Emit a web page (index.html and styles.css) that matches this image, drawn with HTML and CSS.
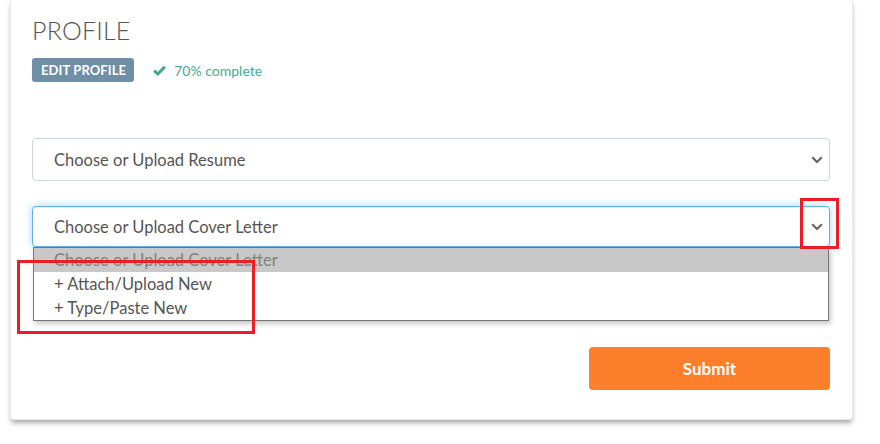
FILE: index.html
```html
<!DOCTYPE html>
<html>
<head>
<meta charset="utf-8">
<link rel="stylesheet" href="styles.css">
</head>
<body>
<div class="page">
  <div class="card">
    <h1 class="title">PROFILE</h1>
    <div class="status-row">
      <span class="badge">EDIT PROFILE</span>
      <span class="complete">
        <svg class="check" viewBox="0 0 13 11" width="13" height="11"><path d="M1.2 5.6 L4.8 9 L11.8 1.8" fill="none" stroke="#3aa98a" stroke-width="3"/></svg>
        70% complete
      </span>
    </div>
    <div class="fields">
      <div class="select">
        <span>Choose or Upload Resume</span>
        <svg class="chev" viewBox="0 0 12 8" width="12" height="8"><path d="M1.2 1.3 L6 6 L10.8 1.3" fill="none" stroke="#666" stroke-width="2.2"/></svg>
      </div>
      <div class="select focused">
        <span>Choose or Upload Cover Letter</span>
        <svg class="chev" viewBox="0 0 12 8" width="12" height="8"><path d="M1.2 1.3 L6 6 L10.8 1.3" fill="none" stroke="#666" stroke-width="2.2"/></svg>
        <div class="menu">
          <div class="opt disabled">Choose or Upload Cover Letter</div>
          <div class="opt">+ Attach/Upload New</div>
          <div class="opt">+ Type/Paste New</div>
        </div>
      </div>
    </div>
    <div class="actions">
      <button class="submit">Submit</button>
    </div>
  </div>
  <div class="mark mark-options"></div>
  <div class="mark mark-chevron"></div>
</div>
</body>
</html>
```
FILE: styles.css
```css
* { box-sizing: border-box; }
html, body { margin: 0; padding: 0; background: #fff; }
body { font-family: Lato, "Open Sans", sans-serif; color: #555; }
.page { position: relative; width: 880px; height: 444px; overflow: hidden; }
.card {
  margin-left: 10px;
  width: 843px;
  background: #fff;
  border: 1px solid #e9e9e9;
  border-top: 0;
  border-radius: 0 0 4px 4px;
  box-shadow: 0 4px 5px -1px rgba(0,0,0,0.35);
  padding: 15px 22px 29px 21px;
}
.title {
  margin: 0;
  font-size: 25px;
  line-height: 30px;
  font-weight: 300;
  color: #555;
  letter-spacing: 0.2px;
}
.status-row {
  margin-top: 13px;
  display: flex;
  align-items: center;
  height: 24px;
}
.badge {
  display: inline-flex;
  align-items: center;
  height: 24px;
  padding: 0 8px 0 9px;
  background: #6f8fa7;
  color: #fff;
  font-size: 13px;
  font-weight: 700;
  border-radius: 3px;
  letter-spacing: 0.1px;
}
.complete {
  margin-left: 19px;
  display: inline-flex;
  align-items: center;
  color: #43ad93;
  font-size: 14px;
}
.check { margin-right: 8px; }
.fields {
  margin-top: 56px;
  display: flex;
  flex-direction: column;
  gap: 25px;
}
.select {
  position: relative;
  height: 43px;
  border: 1px solid #cfd6de;
  border-radius: 4px;
  display: flex;
  align-items: center;
  padding: 0 6px 0 21px;
  font-size: 16.5px;
  color: #555;
  background: #fff;
}
.select span { flex: 1; }
.select.focused {
  height: 41px;
  border-color: #66afe9;
  box-shadow: inset 0 1px 1px rgba(0,0,0,0.075), 0 0 8px rgba(102,175,233,0.55);
}
.chev { display: block; }
.menu {
  position: absolute;
  left: 0;
  right: 0;
  top: 40px;
  border: 1px solid #767676;
  background: #fff;
  box-shadow: 2px 3px 5px rgba(0,0,0,0.22);
  z-index: 2;
}
.opt {
  height: 24px;
  line-height: 24px;
  padding-left: 20px;
  font-size: 16.5px;
  color: #555;
}
.opt.disabled { background: #c8c8c8; color: #808080; }
.actions {
  margin-top: 100px;
  display: flex;
  justify-content: flex-end;
}
.submit {
  width: 241px;
  height: 43px;
  border: 0;
  border-radius: 4px;
  background: #fe7f2b;
  color: #fff;
  font-family: Lato, "Open Sans", sans-serif;
  font-size: 17px;
  font-weight: 700;
}
.mark {
  position: absolute;
  border: 3px solid #ee1c24;
  z-index: 5;
}
.mark-options { left: 17px; top: 260px; width: 238px; height: 74px; }
.mark-chevron { left: 800px; top: 198px; width: 39px; height: 51px; }
```
